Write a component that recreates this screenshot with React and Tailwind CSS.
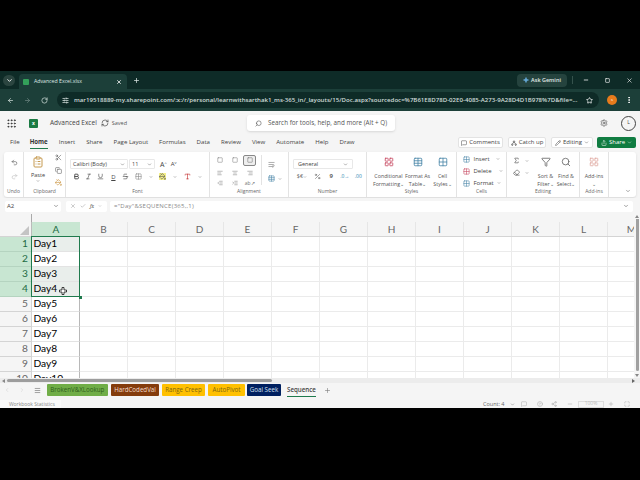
import React from 'react';
import { ChevronDown, ChevronLeft, ChevronRight, ArrowLeft, ArrowRight, RotateCw, Star, EllipsisVertical, Plus, Minus, X, Square, SlidersHorizontal, Grip, RefreshCw, Search, Settings, Undo2, Redo2, Scissors, Copy, PaintBucket, Bold, Italic, Underline, Strikethrough, Grid2x2, Type, Sigma, Eraser, MessageSquare, Pencil, Share, Menu, Maximize, HelpCircle, Check, WrapText, Table, Percent, LayoutGrid, Funnel, Share2, Sparkle, AlignLeft, AlignCenter, AlignRight, IndentDecrease, IndentIncrease, ClipboardList } from 'lucide-react';

const font = "font-['Open_Sans','Liberation_Sans',sans-serif]";
const cols = ['A','B','C','D','E','F','G','H','I','J','K','L','M'];
const rows = [1,2,3,4,5,6,7,8,9,10];

function Group({ label, children, className = '' }) {
  return (
    <div className={`flex flex-col h-full border-r border-[#e3e3e3] shrink-0 ${className}`}>
      <div className="flex-1 min-h-0">{children}</div>
      <div className="h-[9px] text-[5px] leading-[9px] text-center text-[#666] mb-[1px]">{label}</div>
    </div>
  );
}

function Tool({ children, label, cls = 'w-[24px]' }) {
  return (
    <div className={`${cls} flex flex-col items-center text-[5.3px] leading-[8px] text-[#555] text-center shrink-0 whitespace-nowrap`}>
      <div className="h-[20px] flex items-center justify-center">{children}</div>
      {label}
    </div>
  );
}

function Cell({ cls = 'w-[12.4px]', children }) {
  return <div className={`${cls} shrink-0 flex items-center justify-center`}>{children}</div>;
}

function Tab({ cls, children }) {
  return <div className={`h-[12px] flex items-center justify-center text-[6.2px] font-medium rounded-[1px] shrink-0 whitespace-nowrap ${cls}`}>{children}</div>;
}

export default function App() {
  return (
    <div className={`w-[640px] h-[480px] bg-black flex flex-col pt-[71px] overflow-hidden ${font}`}>
      {/* tab strip */}
      <div className="h-[18px] bg-[#0e2b27] flex items-center pl-[3px] shrink-0">
        <div className="w-[12px] h-[11px] rounded-full bg-[#2b4540] flex items-center justify-center"><ChevronDown size={7} className="text-white" strokeWidth={3} /></div>
        <div className="ml-[4px] w-[108px] h-[15px] mt-[3px] rounded-t-[4px] bg-[#1c3f39] flex items-center px-[4px]">
          <div className="w-[6px] h-[6px] bg-[#33a05a] rounded-[1px] shrink-0"></div>
          <span className="ml-[5px] text-[5.2px] text-[#dfe9e6] whitespace-nowrap">Advanced Excel.xlsx</span>
          <X size={6} className="ml-auto mr-[1px] text-white" strokeWidth={3} />
        </div>
        <Plus size={7} className="ml-[6px] text-[#dfe9e6]" strokeWidth={2.5} />
        <div className="ml-auto h-[13px] w-[50px] rounded-[4px] bg-[#25433e] flex items-center justify-center gap-[2px]">
          <Sparkle size={6} className="text-[#6fb4e8] fill-[#6fb4e8]" />
          <span className="text-[5.5px] font-semibold text-[#e2ebe9] whitespace-nowrap">Ask Gemini</span>
        </div>
        <div className="ml-[5px] w-px h-[8px] bg-[#35524c]"></div>
        <Minus size={6} className="ml-[10px] text-white" strokeWidth={3} />
        <Square size={5} className="ml-[15.5px] text-white" strokeWidth={3} />
        <X size={7} className="ml-[16px] mr-[7.5px] text-white" strokeWidth={2} />
      </div>
      {/* url bar */}
      <div className="h-[22px] bg-[#1c3f39] flex items-center pl-[7px] shrink-0">
        <ArrowLeft size={7} className="text-[#cfdcd9]" strokeWidth={2.5} />
        <ArrowRight size={7} className="ml-[10px] text-[#6d8681]" strokeWidth={2.5} />
        <RotateCw size={7} className="ml-[10px] text-[#cfdcd9]" strokeWidth={2.5} />
        <div className="ml-[9px] w-[542px] h-[16px] rounded-full bg-[#0e2b27] flex items-center pl-[5px] pr-[6.5px]">
          <SlidersHorizontal size={7} className="text-[#dfe9e6] shrink-0" strokeWidth={2.5} />
          <span className="ml-[5px] text-[6.1px] font-semibold text-[#cfdcd9] whitespace-nowrap">mar19518889-my.sharepoint.com/:x:/r/personal/learnwithsarthak1_ms-365_in/_layouts/15/Doc.aspx?sourcedoc=%7B61E8D78D-02E0-4085-A273-9A28D4D1B978%7D&amp;file=...</span>
          <Star size={7} className="ml-auto text-white shrink-0" strokeWidth={2.5} />
        </div>
        <div className="ml-[8px] w-[10px] h-[10px] rounded-full bg-[#e87b1c] flex items-center justify-center text-[4px] text-white">s</div>
        <EllipsisVertical size={8} className="ml-[8px] text-white" strokeWidth={3} />
      </div>
      {/* app header */}
      <div className="h-[24px] bg-[#f5f5f5] flex items-center pl-[6px] shrink-0">
        <Grip size={11} className="text-[#333]" strokeWidth={2} />
        <div className="ml-[12px] w-[9px] h-[9px] bg-[#1b7a43] rounded-[1px] flex items-center justify-center text-[5px] leading-none font-bold text-white">x</div>
        <span className="ml-[12px] text-[6.5px] text-[#444] whitespace-nowrap">Advanced Excel</span>
        <RefreshCw size={8} className="ml-[4px] text-[#444]" />
        <span className="ml-[3px] text-[5.5px] text-[#555]">Saved</span>
        <div className="ml-[120px] w-[148px] h-[16px] rounded-[3px] bg-white shadow-sm flex items-center pl-[8px] shrink-0">
          <Search size={7} className="text-[#555] -scale-x-100" />
          <span className="ml-[6px] text-[6.3px] text-[#555] whitespace-nowrap">Search for tools, help, and more (Alt + Q)</span>
        </div>
        <Settings size={8} className="ml-auto text-[#555]" />
        <div className="ml-[13px] mr-[4px] w-[15px] h-[15px] rounded-full border border-[#444] flex items-center justify-center text-[5px] text-[#444]">L</div>
      </div>
      {/* menu tabs */}
      <div className="h-[14px] bg-[#f5f5f5] flex items-center pl-[10px] text-[6.1px] text-[#444] shrink-0">
        <span>File</span>
        <span className="ml-[10px] h-full flex items-center font-bold text-[#333] border-b-[1.5px] border-[#1f7a4d]">Home</span>
        <span className="ml-[11px]">Insert</span>
        <span className="ml-[11px]">Share</span>
        <span className="ml-[11px]">Page Layout</span>
        <span className="ml-[11px]">Formulas</span>
        <span className="ml-[11px]">Data</span>
        <span className="ml-[11px]">Review</span>
        <span className="ml-[11px]">View</span>
        <span className="ml-[11px]">Automate</span>
        <span className="ml-[11px]">Help</span>
        <span className="ml-[11px]">Draw</span>
        <div className="ml-auto flex items-center pr-[4px] text-[6px] mt-[1px]">
          <div className="h-[11px] w-[45px] bg-white border border-[#e3e3e3] rounded-[2px] flex items-center justify-center gap-[2px]"><MessageSquare size={6} />Comments</div>
          <div className="ml-[5px] h-[11px] w-[38px] bg-white border border-[#e3e3e3] rounded-[2px] flex items-center justify-center gap-[2px] whitespace-nowrap"><Share2 size={6} className="rotate-90" />Catch up</div>
          <div className="ml-[5px] h-[11px] w-[42px] bg-white border border-[#e3e3e3] rounded-[2px] flex items-center justify-center gap-[2px]"><Pencil size={6} />Editing<ChevronDown size={5} /></div>
          <div className="ml-[4px] h-[11px] w-[39px] bg-[#107c41] text-white rounded-[2px] flex items-center justify-center gap-[2px]"><Share size={6} />Share<ChevronDown size={5} /></div>
        </div>
      </div>
      {/* ribbon */}
      <div className="h-[49px] bg-[#f5f5f5] px-[4px] pt-[3px] pb-[1px] shrink-0">
        <div className="h-full bg-white rounded-[3px] shadow-sm flex items-stretch text-[#444]">
          <Group label="Undo" className="w-[20px]">
            <div className="flex flex-col items-center pt-[7px] gap-[7px] pl-[1px]">
              <Undo2 size={7} className="text-[#555]" />
              <Redo2 size={7} className="text-[#bbb]" />
            </div>
          </Group>
          <Group label="Clipboard" className="w-[42px]">
            <div className="flex pl-[4px] pt-[4px]">
              <div className="flex flex-col items-center w-[20px]">
                <ClipboardList size={12} className="text-[#c69a50]" />
                <span className="text-[5.5px] leading-[8px] mt-[3px]">Paste</span>
                <ChevronDown size={4} />
              </div>
              <div className="flex flex-col items-center pl-[7px] -mt-[2px] gap-[5.5px]">
                <Scissors size={7} className="text-[#666]" />
                <Copy size={7} className="text-[#666]" />
                <PaintBucket size={7} className="text-[#c8913a]" />
              </div>
            </div>
          </Group>
          <Group label="Font" className="w-[144px]">
            <div className="pl-[4px] pt-[7px]">
              <div className="flex items-center">
                <div className="w-[58px] h-[10px] border border-[#e8e8e8] rounded-[1px] flex items-center justify-between px-[2px] text-[5.5px]">Calibri (Body)<ChevronDown size={5} /></div>
                <div className="ml-[1px] w-[26px] h-[10px] border border-[#e8e8e8] rounded-[1px] flex items-center justify-between px-[2px] text-[5.5px]">11<ChevronDown size={5} /></div>
                <span className="ml-[5px] text-[7px] leading-none">A<sup className="text-[4px]">^</sup></span>
                <span className="ml-[4px] text-[6px] leading-none">A<sup className="text-[4px]">v</sup></span>
              </div>
              <div className="flex items-center mt-[4px]">
                <Cell><Bold size={7} strokeWidth={3} /></Cell>
                <Cell><Italic size={7} /></Cell>
                <Cell><Underline size={7} /></Cell>
                <Cell><span className="text-[6px] leading-none underline">D</span></Cell>
                <Cell><Strikethrough size={7} /></Cell>
                <Cell><Grid2x2 size={7} className="text-[#888]" /></Cell>
                <Cell><ChevronDown size={4} /></Cell>
                <Cell><PaintBucket size={7} className="text-[#555] bg-[#f5f08a]" /></Cell>
                <Cell><ChevronDown size={4} /></Cell>
                <Cell><Type size={7} className="text-[#c02020]" /></Cell>
                <Cell><ChevronDown size={4} /></Cell>
              </div>
            </div>
          </Group>
          <Group label="Alignment" className="w-[79px]">
            <div className="flex pl-[3px] pt-[1px]">
              <div className="grid grid-cols-3 w-[44px] h-[36px] items-center justify-items-center">
                <Square size={6} className="text-[#777]" />
                <Square size={6} className="text-[#777]" />
                <div className="w-[13px] h-[11px] border border-[#888] rounded-[2px] bg-[#eee] flex items-center justify-center"><Square size={6} className="text-[#666]" /></div>
                <AlignLeft size={6} className="text-[#777]" />
                <AlignCenter size={6} className="text-[#777]" />
                <AlignRight size={6} className="text-[#777]" />
                <IndentDecrease size={6} className="text-[#777]" />
                <IndentIncrease size={6} className="text-[#777]" />
                <span className="text-[5px] text-[#777]">ab↗</span>
              </div>
              <div className="ml-[4px] pl-[6px] border-l border-[#e3e3e3] h-[30px] mt-[2px] flex flex-col gap-[7px] pt-[6px]">
                <WrapText size={7} className="text-[#777]" />
                <div className="flex items-center gap-[3px]"><Table size={7} className="text-[#4b87a8]" /><ChevronDown size={4} /></div>
              </div>
            </div>
          </Group>
          <Group label="Number" className="w-[78px]">
            <div className="pl-[4px] pt-[7px]">
              <div className="w-[60px] h-[10px] border border-[#e8e8e8] rounded-[1px] flex items-center justify-between px-[4px] text-[5.5px]">General<ChevronDown size={5} /></div>
              <div className="flex items-center mt-[4px] text-[6px] leading-[7px] text-[#666]">
                <Cell cls="w-[18px]"><span className="text-[5.5px]">$€</span><ChevronDown size={4} /></Cell>
                <Cell cls="w-[13.5px]"><Percent size={7} /></Cell>
                <Cell cls="w-[13.5px]"><span className="font-bold">9</span></Cell>
                <Cell cls="w-[13.5px]"><span className="text-[#2b86b0] text-[5px]">.0→</span></Cell>
                <Cell cls="w-[13.5px]"><span className="text-[#2b86b0] text-[5px]">.00</span></Cell>
              </div>
            </div>
          </Group>
          <Group label="Styles" className="w-[90px]">
            <div className="flex pl-[7px]">
              <Tool label={<>Conditional<br />Formatting⌄</>} cls="w-[29px]"><LayoutGrid size={10} className="text-[#c84a63]" /></Tool>
              <Tool label={<>Format As<br />Table⌄</>} cls="w-[29px]"><Table size={10} className="text-[#4b87a8]" /></Tool>
              <Tool label={<>Cell<br />Styles⌄</>} cls="w-[21px]"><Grid2x2 size={10} className="text-[#4b87a8]" /></Tool>
            </div>
          </Group>
          <Group label="Cells" className="w-[50px]">
            <div className="flex flex-col pl-[6px] pt-[1px] text-[6px]">
              <div className="flex items-center h-[12px] gap-[3.5px]"><Grid2x2 size={7} className="text-[#4b87a8]" />Insert<ChevronDown size={4} className="ml-[3px]" /></div>
              <div className="flex items-center h-[12px] gap-[3.5px]"><Grid2x2 size={7} className="text-[#c84a63]" />Delete<ChevronDown size={4} className="ml-[4px]" /></div>
              <div className="flex items-center h-[12px] gap-[3.5px]"><Grid2x2 size={7} className="text-[#4b87a8]" />Format<ChevronDown size={4} /></div>
            </div>
          </Group>
          <Group label="Editing" className="w-[73px]">
            <div className="flex">
              <div className="flex flex-col gap-[5px] pt-[5px] pl-[6px] w-[28px] shrink-0">
                <div className="flex items-center gap-[5px]"><Sigma size={7} /><ChevronDown size={4} /></div>
                <div className="flex items-center gap-[5px]"><Eraser size={7} /><ChevronDown size={4} /></div>
              </div>
              <Tool label={<>Sort &amp;<br />Filter⌄</>} cls="w-[21px]"><Funnel size={10} className="text-[#666]" /></Tool>
              <Tool label={<>Find &amp;<br />Select⌄</>} cls="w-[20px]"><Search size={10} className="text-[#666]" /></Tool>
            </div>
          </Group>
          <Group label="Add-ins" className="w-[29px]">
            <Tool label={<>Add-ins<br />⌄</>} cls="w-[28px]"><LayoutGrid size={10} className="text-[#e0a8a0]" /></Tool>
          </Group>
          <div className="flex-1 flex items-end justify-end pr-[5px] pb-[3px]"><ChevronDown size={6} className="text-[#555]" /></div>
        </div>
      </div>
      {/* formula bar */}
      <div className="h-[16px] bg-[#f5f5f5] flex items-center pl-[5px] pr-[7px] shrink-0 text-[6px] text-[#444]">
        <div className="w-[56px] h-[11px] bg-white rounded-[2px] flex items-center justify-between px-[2px]">A2<ChevronDown size={6} /></div>
        <div className="ml-[5px] w-[41px] h-[11px] bg-white rounded-[2px] flex items-center gap-[4px] pl-[4px] text-[#999]"><X size={6} /><Check size={6} /><i className="font-serif text-[#555] text-[5.5px]">fx</i><ChevronDown size={4} /></div>
        <div className="ml-[3px] flex-1 h-[11px] bg-white rounded-[2px] flex items-center justify-between px-[4px] text-[#888] tracking-[0.25px]">="Day"&amp;SEQUENCE(365,,1)<ChevronDown size={6} className="text-[#444]" /></div>
      </div>
      <div className="h-[8px] bg-[#f5f5f5] shrink-0 flex pl-[31px]">
        <div className="w-px bg-[#aaa]"></div>
        <div className="ml-auto w-[6px] flex flex-col items-center justify-end">
          <div className="w-0 h-0 mb-[1px] border-x-[2px] border-x-transparent border-b-[3px] border-b-[#888]"></div>
          <div className="w-[3px] h-[3px] bg-[#a0a0a0]"></div>
        </div>
      </div>
      {/* grid */}
      <div className="h-[156px] bg-white shrink-0 flex overflow-hidden relative font-['Lato','Liberation_Sans',sans-serif]">
        <div className="flex-1 min-w-0 overflow-hidden">
          <div className="flex h-[15px] bg-[#f5f5f5] border-b border-[#d4d4d4]">
            <div className="w-[32px] shrink-0 border-r border-[#bbb] flex items-end justify-end pr-[2px] pb-[1px]">
              <div className="w-0 h-0 border-l-[9px] border-l-transparent border-b-[9px] border-b-[#c4c4c4]"></div>
            </div>
            {cols.map((c) => (
              <div key={c} className={`w-[48px] shrink-0 flex items-center justify-center text-[10px] ${c === 'A' ? 'bg-[#c8e6d2] text-[#1d6b43]' : 'text-[#666] border-r border-[#e6e6e6]'}`}>{c}</div>
            ))}
          </div>
          {rows.map((r) => (
            <div key={r} className="flex h-[15px]">
              <div className={`w-[32px] shrink-0 flex items-center justify-end pr-[3px] text-[10.2px] border-r border-b ${r <= 4 ? 'bg-[#c8e6d2] text-[#1d6b43] border-[#b5d4c0]' : 'bg-[#f5f5f5] text-[#666] border-[#d4d4d4]'}`}>{r}</div>
              {cols.map((c) => (
                <div key={c} className={`w-[48px] shrink-0 border-b flex items-center pl-[1.5px] text-[10.2px] text-black ${c === 'A' ? 'border-r border-r-[#b8b8b8] border-b-[#e3e3e3]' : 'border-r border-[#ebebeb]'} ${c === 'A' && (r === 1 || r === 3 || r === 4) ? 'bg-[#e9eeeb]' : ''}`}>{c === 'A' ? `Day${r}` : ''}</div>
              ))}
            </div>
          ))}
        </div>
        <div className="w-[6px] shrink-0 bg-[#f5f5f5] flex flex-col items-center pb-[1px]">
          <div className="w-[3px] h-[149px] bg-[#a0a0a0] rounded-b-full"></div>
          <div className="w-0 h-0 mt-auto border-x-[2px] border-x-transparent border-t-[3px] border-t-[#888]"></div>
        </div>
        {/* selection */}
        <div className="absolute left-[31px] top-[14px] w-[49px] h-[61px] border-[1.5px] border-[#1f7a4d]"></div>
        <div className="absolute left-[79px] top-[74px] w-[3px] h-[3px] bg-[#1f7a4d]"></div>
        <svg className="absolute left-[59px] top-[65px]" width="8" height="8" viewBox="0 0 8 8"><path d="M3 0.5h2v2.5h2.5v2H5v2.5H3V5H0.5V3H3z" fill="#fff" stroke="#111" strokeWidth="0.8" /></svg>
      </div>
      {/* h scrollbar */}
      <div className="h-[5px] bg-[#ececec] shrink-0 flex items-center pl-[2px] pr-[5px]">
        <div className="w-0 h-0 border-y-[2px] border-y-transparent border-r-[3px] border-r-[#888]"></div>
        <div className="ml-[2px] w-[265px] h-[3px] rounded-full bg-[#9d9d9d]"></div>
        <div className="ml-auto w-0 h-0 border-y-[2px] border-y-transparent border-l-[3px] border-l-[#666]"></div>
      </div>
      {/* sheet tabs */}
      <div className="h-[17px] bg-[#f5f5f5] flex items-center pl-[4px] pb-[3px] shrink-0">
        <ChevronLeft size={6} className="text-[#ccc]" />
        <ChevronRight size={6} className="ml-[9px] text-[#ccc]" />
        <Menu size={7} className="ml-[8.5px] text-[#666]" />
        <Tab cls="ml-[6px] w-[61.5px] bg-[#70ad47] text-[#2f5e1c]">BrokenV&amp;XLookup</Tab>
        <Tab cls="ml-[3px] w-[48px] bg-[#843c0c] text-[#f5dfd0]">HardCodedVal</Tab>
        <Tab cls="ml-[3px] w-[43px] bg-[#ffc000] text-[#7c6410]">Range Creep</Tab>
        <Tab cls="ml-[3px] w-[37px] bg-[#ffc000] text-[#7c6410]">AutoPivot</Tab>
        <Tab cls="ml-[2px] w-[34px] bg-[#002060] text-[#d8e0f0]">Goal Seek</Tab>
        <div className="ml-[6px] h-[14px] flex items-center text-[6.2px] font-semibold text-[#444] border-b border-[#1f7a4d]">Sequence</div>
        <Plus size={7} className="ml-[8px] text-[#777]" />
      </div>
      {/* status */}
      <div className="h-[8px] bg-[#f5f5f5] flex items-center pr-[10px] shrink-0 text-[5.5px] text-[#888]">
        <div className="w-[61px] h-full bg-[#fafafa] pl-[9px] text-[5px] leading-[8px] whitespace-nowrap">Workbook Statistics</div>
        <span className="ml-auto text-[#666]">Count: 4</span>
        <ChevronDown size={5} className="ml-[5px] text-[#666]" />
        <MessageSquare size={6} className="ml-[6.5px] text-[#aaa]" />
        <HelpCircle size={6} className="ml-[10px] text-[#aaa]" />
        <Share2 size={6} className="ml-[8px] text-[#aaa]" />
        <Minus size={6} className="ml-[10px] text-[#aaa]" />
        <div className="ml-[5px] w-[26px] h-[7px] border border-[#ddd] text-[#bbb] text-[5px] flex items-center justify-center">100%</div>
        <Plus size={6} className="ml-[4px] text-[#aaa]" />
        <Maximize size={6} className="ml-[10px] text-[#aaa]" />
      </div>
    </div>
  );
}
